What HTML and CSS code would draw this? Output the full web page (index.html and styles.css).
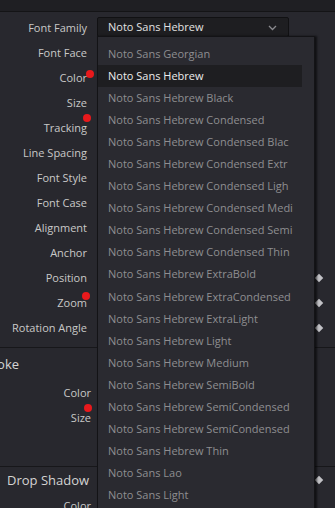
FILE: index.html
```html
<!DOCTYPE html>
<html lang="en">
<head>
  <meta charset="UTF-8" />
  <meta name="viewport" content="width=device-width, initial-scale=1.0" />
  <title>Text Inspector</title>
  <link rel="stylesheet" href="styles.css">
</head>
<body>

  <!-- Top bar -->
  <div class="topbar"></div>

  <div class="panel">

    <!-- Text section -->
    <div class="section">
      <div class="row">
        <div class="label">Font Family</div>
        <div class="select">
          <span>Noto Sans Hebrew</span>
          <svg class="chevron" width="9" height="6" viewBox="0 0 9 6"><path d="M1 1 L4.5 4.5 L8 1" fill="none" stroke="#8a8a8e" stroke-width="1.3"/></svg>
        </div>
      </div>
      <div class="row"><div class="label">Font Face</div></div>
      <div class="row"><div class="label">Color<span class="dot dot-color"></span></div></div>
      <div class="row"><div class="label">Size</div></div>
      <div class="row"><div class="label">Tracking<span class="dot dot-tracking"></span></div></div>
      <div class="row"><div class="label">Line Spacing</div></div>
      <div class="row"><div class="label">Font Style</div></div>
      <div class="row"><div class="label">Font Case</div></div>
      <div class="row"><div class="label">Alignment</div></div>
      <div class="row"><div class="label">Anchor</div></div>
      <div class="row"><div class="label">Position</div><div class="key"><span class="diamond"></span></div></div>
      <div class="row"><div class="label">Zoom<span class="dot dot-zoom"></span></div><div class="key"><span class="diamond"></span></div></div>
      <div class="row"><div class="label">Rotation Angle</div><div class="key"><span class="diamond"></span></div></div>
    </div>

    <!-- Stroke section -->
    <div class="section stroke">
      <div class="section-title title-cut">Stroke</div>
      <div class="row"><div class="label wide">Color</div></div>
      <div class="row"><div class="label wide">Size<span class="dot dot-size"></span></div></div>
    </div>

    <!-- Drop shadow section -->
    <div class="section shadow">
      <div class="row head">
        <div class="section-title">Drop Shadow</div>
        <div class="key"><span class="diamond"></span></div>
      </div>
      <div class="row"><div class="label wide">Color</div></div>
    </div>

  </div>

  <!-- Open font list -->
  <div class="menu">
    <div class="item">Noto Sans Georgian</div>
    <div class="item selected">Noto Sans Hebrew</div>
    <div class="item">Noto Sans Hebrew Black</div>
    <div class="item">Noto Sans Hebrew Condensed</div>
    <div class="item">Noto Sans Hebrew Condensed Blac</div>
    <div class="item">Noto Sans Hebrew Condensed Extr</div>
    <div class="item">Noto Sans Hebrew Condensed Ligh</div>
    <div class="item">Noto Sans Hebrew Condensed Medi</div>
    <div class="item">Noto Sans Hebrew Condensed Semi</div>
    <div class="item">Noto Sans Hebrew Condensed Thin</div>
    <div class="item">Noto Sans Hebrew ExtraBold</div>
    <div class="item">Noto Sans Hebrew ExtraCondensed</div>
    <div class="item">Noto Sans Hebrew ExtraLight</div>
    <div class="item">Noto Sans Hebrew Light</div>
    <div class="item">Noto Sans Hebrew Medium</div>
    <div class="item">Noto Sans Hebrew SemiBold</div>
    <div class="item">Noto Sans Hebrew SemiCondensed</div>
    <div class="item">Noto Sans Hebrew SemiCondensed</div>
    <div class="item">Noto Sans Hebrew Thin</div>
    <div class="item">Noto Sans Lao</div>
    <div class="item">Noto Sans Light</div>
  </div>

</body>
</html>
```

FILE: styles.css
```css
body {
  font-family: "Open Sans", "Noto Sans", sans-serif;
  font-size: 11px;
  background-color: #28282e;
  color: #c8c8c8;
  margin: 0;
  padding: 0;
  width: 335px;
  height: 508px;
  overflow: hidden;
  position: relative;
}

.topbar {
  height: 11px;
  background-color: #1f1f23;
  border-bottom: 1px solid #141416;
}

.panel {
  padding-top: 3px;
}

.section {
  border-bottom: 1px solid #17171a;
  padding-bottom: 7px;
}

.stroke {
  padding-bottom: 36px;
}

.shadow {
  border-bottom: none;
}

.row {
  height: 25px;
  display: flex;
  align-items: center;
}

.label {
  width: 87px;
  line-height: 15px;
  text-align: right;
  position: relative;
  white-space: nowrap;
  flex-shrink: 0;
}

.label.wide {
  width: 91px;
}

/* red "changed" markers */
.dot {
  position: absolute;
  width: 8px;
  height: 8px;
  border-radius: 50%;
  background-color: #e8191c;
}

.dot-color {
  right: -7px;
  top: 0;
}

.dot-tracking {
  right: -4px;
  top: -6px;
}

.dot-zoom {
  right: -3px;
  top: -3px;
}

.dot-size {
  right: -1px;
  top: -6px;
}

.select {
  margin-left: 10px;
  height: 18px;
  margin-top: -2px;
  background-color: #1e1e21;
  border: 1px solid #111113;
  border-radius: 2px;
  display: flex;
  align-items: center;
  justify-content: space-between;
  padding: 0 11px 0 10px;
  width: 169px;
  color: #e2e2e2;
}

.chevron {
  margin-top: 2px;
}

.key {
  margin-left: auto;
  width: 32px;
  display: flex;
  justify-content: center;
}

.diamond {
  width: 6px;
  height: 6px;
  margin-right: 1px;
  background-color: #c2c2c6;
  transform: rotate(45deg);
}

.section-title {
  font-size: 13px;
  color: #d4d4d4;
  white-space: nowrap;
}

.title-cut {
  margin-left: -20px;
  height: 32px;
  line-height: 32px;
}

.head {
  height: 26px;
}

.head .section-title {
  padding-left: 7px;
}

/* open dropdown list */
.menu {
  position: absolute;
  left: 97px;
  top: 36px;
  width: 216px;
  height: 480px;
  background-color: #2a2a30;
  border: 1px solid #131316;
  box-shadow: 2px 0 2px rgba(0, 0, 0, 0.6);
  padding-top: 6px;
}

.item {
  height: 22.05px;
  line-height: 22px;
  padding-left: 10px;
  margin-right: 12px;
  color: #8e8e90;
  white-space: nowrap;
  overflow: hidden;
}

.item.selected {
  background-color: #1e1e21;
  color: #ececec;
}
```
